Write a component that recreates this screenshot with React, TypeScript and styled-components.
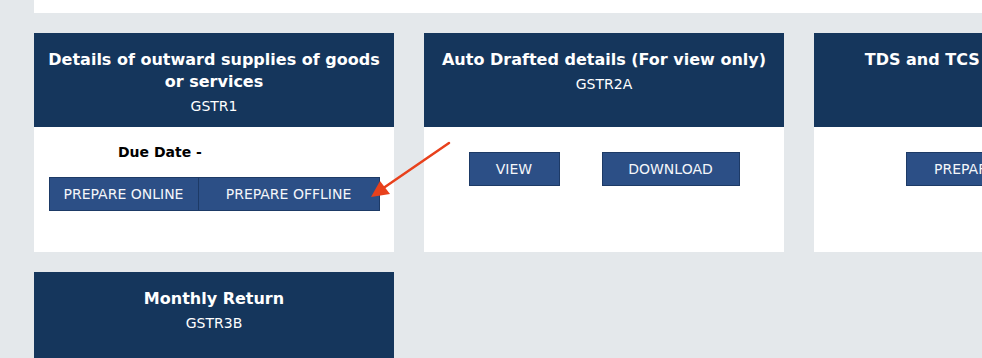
import React from "react";
import styled, { createGlobalStyle } from "styled-components";

const Global = createGlobalStyle`
  html, body { margin: 0; padding: 0; }
  body {
    background: #e4e8eb;
    font-family: "DejaVu Sans", Verdana, sans-serif;
    overflow: hidden;
  }
`;

const Page = styled.div`
  position: relative;
  width: 982px;
  height: 358px;
  overflow: hidden;
  padding-left: 34px;
  box-sizing: border-box;
`;

const TopBar = styled.div`
  height: 13px;
  background: #ffffff;
  margin-bottom: 20px;
`;

const Grid = styled.div`
  display: grid;
  grid-template-columns: repeat(3, 360px);
  column-gap: 30px;
  row-gap: 20px;
  width: 1200px;
`;

const Card = styled.div`
  background: #ffffff;
  display: flex;
  flex-direction: column;
`;

const Header = styled.div`
  background: #15365c;
  height: 94px;
  box-sizing: border-box;
  padding: 16px 12px 0;
  text-align: center;
  color: #ffffff;
`;

const Title = styled.div`
  font-weight: bold;
  font-size: 16px;
  line-height: 22px;
`;

const Code = styled.div`
  font-size: 14px;
  line-height: 18px;
  margin-top: 4px;
`;

const Body = styled.div<{ $top: number }>`
  height: 125px;
  box-sizing: border-box;
  padding-top: ${(p) => p.$top}px;
  display: flex;
  flex-direction: column;
`;

const DueDate = styled.div`
  font-weight: bold;
  font-size: 14px;
  line-height: 18px;
  color: #000;
  padding-left: 84px;
  margin-bottom: 16px;
`;

const Buttons = styled.div<{ $gap: number }>`
  display: flex;
  justify-content: center;
  gap: ${(p) => p.$gap}px;
`;

const Button = styled.button<{ $w: number }>`
  width: ${(p) => p.$w}px;
  height: 34px;
  background: #2c4f86;
  border: 1px solid #1d3a66;
  color: #f4f6fa;
  font-family: "DejaVu Sans", Verdana, sans-serif;
  font-size: 14px;
  padding: 0;
  cursor: pointer;
  text-align: center;
`;

const Group = styled.div`
  display: flex;
  & > button + button { margin-left: -1px; }
`;

const ArrowLayer = styled.svg`
  position: absolute;
  left: 0;
  top: 0;
  pointer-events: none;
`;

export default function App() {
  return (
    <>
      <Global />
      <Page>
        <TopBar />
        <Grid>
          <Card>
            <Header>
              <Title>Details of outward supplies of goods or services</Title>
              <Code>GSTR1</Code>
            </Header>
            <Body $top={16}>
              <DueDate>Due Date -</DueDate>
              <Buttons $gap={0}>
                <Group>
                  <Button $w={150}>PREPARE ONLINE</Button>
                  <Button $w={182}>PREPARE OFFLINE</Button>
                </Group>
              </Buttons>
            </Body>
          </Card>
          <Card>
            <Header>
              <Title>Auto Drafted details (For view only)</Title>
              <Code>GSTR2A</Code>
            </Header>
            <Body $top={25}>
              <Buttons $gap={42}>
                <Button $w={91}>VIEW</Button>
                <Button $w={138}>DOWNLOAD</Button>
              </Buttons>
            </Body>
          </Card>
          <Card>
            <Header>
              <Title>TDS and TCS Credit received</Title>
            </Header>
            <Body $top={25}>
              <Buttons $gap={0}>
                <Button $w={176}>PREPARE ONLINE</Button>
              </Buttons>
            </Body>
          </Card>
          <Card>
            <Header>
              <Title>Monthly Return</Title>
              <Code>GSTR3B</Code>
            </Header>
          </Card>
        </Grid>
        <ArrowLayer width="982" height="358" viewBox="0 0 982 358">
          <line x1="449" y1="143" x2="382" y2="189" stroke="#e8411c" strokeWidth="2.5" strokeLinecap="round" />
          <polygon points="371,197 380,181 390,194" fill="#e8411c" />
        </ArrowLayer>
      </Page>
    </>
  );
}
